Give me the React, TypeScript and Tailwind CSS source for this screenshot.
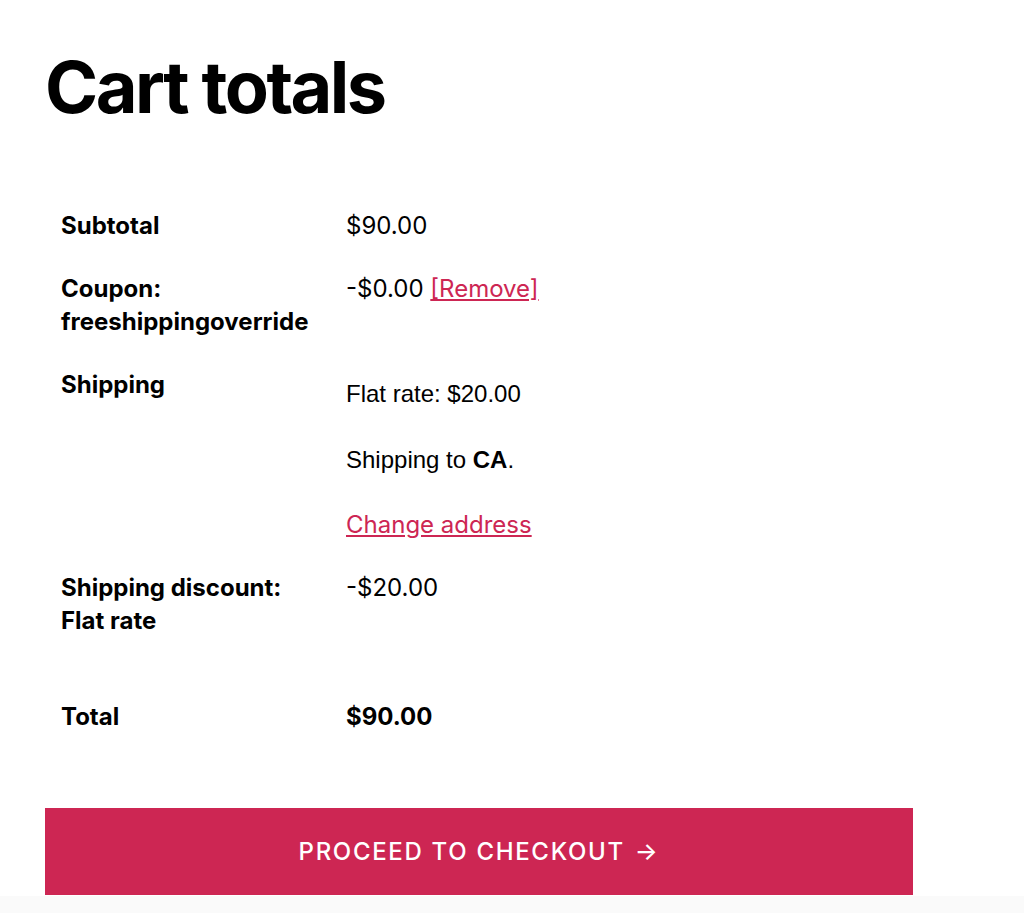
import React from "react";

export default function App() {
  return (
    <div
      className="w-[1024px] h-[913px] bg-white text-black flex flex-col overflow-hidden"
      style={{ fontFamily: "Inter, 'Noto Sans', sans-serif" }}
    >
      <div className="flex-1 pl-[45px] pr-[111px]">
        <h2 className="pt-[51px] text-[72px] leading-none font-bold tracking-[-0.035em]">
          Cart totals
        </h2>

        <div className="mt-[71px] text-[24px] leading-[33px]">
          <div className="flex py-[15px]">
            <div className="w-[301px] pl-4 font-bold">Subtotal</div>
            <div>$90.00</div>
          </div>

          <div className="flex py-[15px]">
            <div className="w-[301px] pl-4 font-bold">
              Coupon:
              <br />
              freeshippingoverride
            </div>
            <div>
              -$0.00{" "}
              <a href="#" className="text-[#cd2653] underline underline-offset-2">
                [Remove]
              </a>
            </div>
          </div>

          <div className="flex py-[15px]">
            <div className="w-[301px] pl-4 font-bold">Shipping</div>
            <div className="pt-[9px]">
              <p className="font-['Liberation_Sans',Arial,sans-serif]">
                Flat rate: $20.00
              </p>
              <p className="mt-[33px] font-['Liberation_Sans',Arial,sans-serif]">
                Shipping to <strong className="font-bold">CA</strong>.
              </p>
              <p className="mt-[32px]">
                <a href="#" className="text-[#cd2653] underline underline-offset-2">
                  Change address
                </a>
              </p>
            </div>
          </div>

          <div className="flex py-[15px]">
            <div className="w-[301px] pl-4 font-bold">
              Shipping discount:
              <br />
              Flat rate
            </div>
            <div>-$20.00</div>
          </div>

          <div className="flex pt-[48px] pb-[15px]">
            <div className="w-[301px] pl-4 font-bold">Total</div>
            <div className="font-bold">$90.00</div>
          </div>
        </div>

        <a
          href="#"
          className="mt-[60px] flex h-[87px] w-[868px] items-center justify-center bg-[#cd2653] text-white text-[24px] font-medium uppercase tracking-[0.07em]"
        >
          Proceed to checkout <span className="ml-[10px]">→</span>
        </a>
      </div>
      <div className="h-[17px] bg-[#fafafa]" />
    </div>
  );
}
